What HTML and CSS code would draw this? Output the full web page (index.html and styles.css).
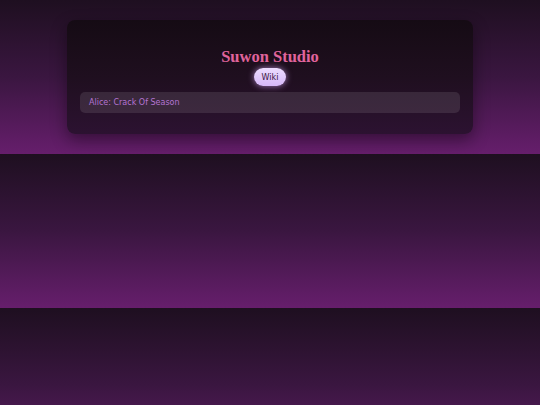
FILE: index.html
```html
<!DOCTYPE html>
<html>
<head>
<meta charset="utf-8">
<link rel="stylesheet" href="styles.css">
</head>
<body>
<main class="card">
  <h1 class="title">Suwon Studio</h1>
  <div class="tabs"><button class="pill">Wiki</button></div>
  <ul class="list">
    <li class="item">Alice: Crack Of Season</li>
  </ul>
</main>
</body>
</html>
```
FILE: styles.css
```css
html {
  background: linear-gradient(180deg, #1e0f20 0%, #3a1640 50%, #661e6c 100%);
  background-size: 100% 154px;
  background-repeat: repeat;
  min-height: 100%;
}
body {
  margin: 0;
  padding: 20px 0 20px;
  font-family: "DejaVu Sans", sans-serif;
}
.card {
  width: 406px;
  box-sizing: border-box;
  margin: 0 auto;
  padding: 27px 13px 21px;
  border-radius: 8px;
  background: linear-gradient(180deg, #150b14 0%, #1f0f1f 50%, #2c1231 100%);
  box-shadow: 0 6px 16px rgba(10, 0, 12, 0.45);
}
.title {
  margin: 0;
  text-align: center;
  font-family: "Liberation Serif", serif;
  font-weight: bold;
  font-size: 16.5px;
  line-height: 20px;
  color: #e0649c;
}
.tabs {
  display: flex;
  justify-content: center;
  margin-top: 1px;
}
.pill {
  border: none;
  height: 18px;
  padding: 0 8px;
  border-radius: 9px;
  background: linear-gradient(180deg, #ecdcff, #d6b8f8);
  color: #3a1642;
  font-family: "DejaVu Sans", sans-serif;
  font-size: 8px;
  box-shadow: 0 0 6px rgba(220, 170, 255, 0.7);
}
.list {
  list-style: none;
  margin: 6px 0 0;
  padding: 0;
}
.item {
  height: 21px;
  display: flex;
  align-items: center;
  padding: 0 9px;
  border-radius: 5px;
  background: rgba(255, 255, 255, 0.1);
  color: #b474d2;
  font-family: "DejaVu Sans", sans-serif;
  font-size: 8px;
}
```
